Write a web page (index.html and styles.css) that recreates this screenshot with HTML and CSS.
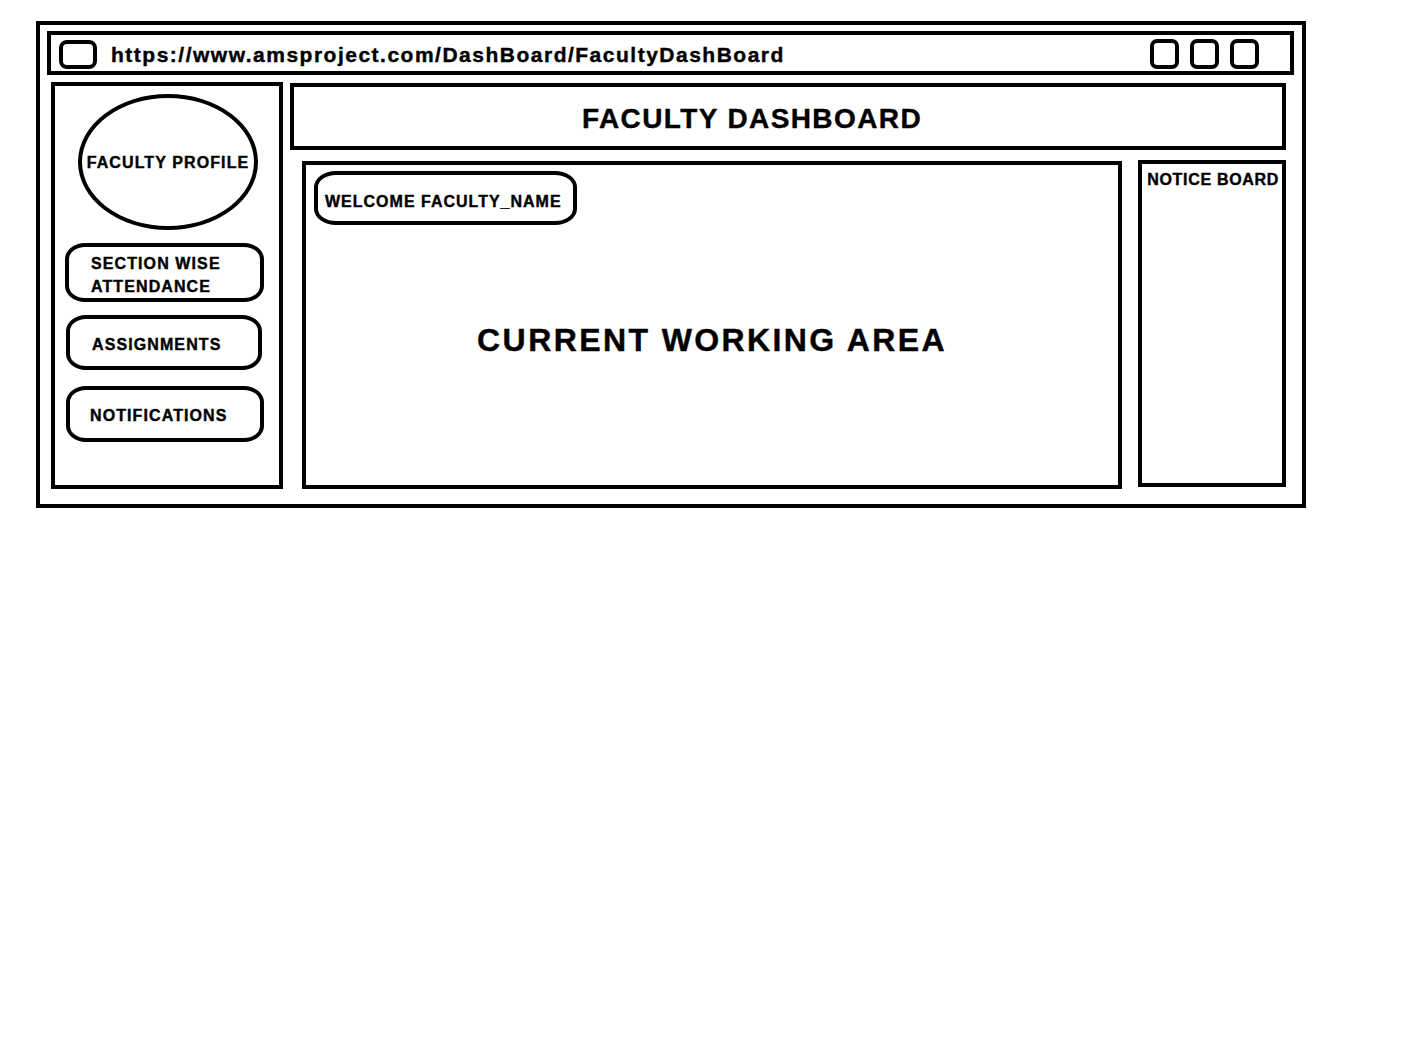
FILE: index.html
```html
<!DOCTYPE html>
<html lang="en">
<head>
  <meta charset="UTF-8">
  <title>Faculty Dashboard</title>
  <link rel="stylesheet" href="styles.css">
</head>
<body>

  <div class="window">

    <!-- Address bar -->
    <div class="urlbar">
      <span class="tab-icon"></span>
      <span class="url">https://www.amsproject.com/DashBoard/FacultyDashBoard</span>
      <div class="win-buttons">
        <span class="win-btn"></span>
        <span class="win-btn"></span>
        <span class="win-btn"></span>
      </div>
    </div>

    <div class="page">

      <!-- Sidebar -->
      <div class="sidebar">
        <div class="profile">FACULTY PROFILE</div>
        <div class="nav-btn nav-attendance">SECTION WISE<br>ATTENDANCE</div>
        <div class="nav-btn nav-assign">ASSIGNMENTS</div>
        <div class="nav-btn nav-notify">NOTIFICATIONS</div>
      </div>

      <div class="content">
        <header class="title">FACULTY DASHBOARD</header>

        <div class="panels">
          <div class="work-area">
            <div class="welcome">WELCOME FACULTY_NAME</div>
            <h2 class="work-title">CURRENT WORKING AREA</h2>
          </div>

          <div class="notice">NOTICE BOARD</div>
        </div>
      </div>

    </div>
  </div>

</body>
</html>
```

FILE: styles.css
```css
body {
  margin: 0;
  background: #fff;
  color: #000;
  font-family: "Liberation Sans", Arial, sans-serif;
  font-weight: bold;
  -webkit-text-stroke: 0.4px #000;
}
.window {
  box-sizing: border-box;
  width: 1270px;
  height: 487px;
  margin: 21px 0 0 36px;
  border: 4px solid #000;
  padding: 6px 8px 0 7px;
}

/* Address bar */
.urlbar {
  box-sizing: border-box;
  height: 44px;
  border: 4px solid #000;
  display: flex;
  align-items: center;
  padding: 0 31px 0 8px;
}
.tab-icon {
  box-sizing: border-box;
  width: 38px;
  height: 29px;
  border: 4px solid #000;
  border-radius: 8px;
  margin-top: 2px;
}
.url {
  margin-left: 14px;
  padding-top: 3px;
  font-size: 21px;
  letter-spacing: 1.5px;
  flex: 1;
}
.win-buttons {
  display: flex;
  gap: 11px;
  margin-top: 2px;
}
.win-btn {
  box-sizing: border-box;
  width: 29px;
  height: 30px;
  border: 4px solid #000;
  border-radius: 7px;
}

.page {
  display: flex;
  margin-top: 7px;
  padding-left: 4px;
}

/* Sidebar */
.sidebar {
  box-sizing: border-box;
  width: 232px;
  height: 407px;
  border: 4px solid #000;
  padding: 8px 0 0 10px;
  font-size: 16px;
  letter-spacing: 1.1px;
}
.profile {
  box-sizing: border-box;
  width: 180px;
  height: 136px;
  margin-left: 13px;
  border: 4px solid #000;
  border-radius: 50%;
  display: flex;
  align-items: center;
  justify-content: center;
  white-space: nowrap;
  padding-top: 1px;
  margin-bottom: 13px;
}
.nav-btn {
  box-sizing: border-box;
  border: 4px solid #000;
  border-radius: 20px / 16px;
  padding: 4px 0 0 22px;
  display: flex;
  align-items: center;
}
.nav-attendance {
  width: 199px;
  height: 59px;
  line-height: 23px;
  margin-bottom: 13px;
}
.nav-assign {
  width: 196px;
  height: 55px;
  margin-left: 1px;
  margin-bottom: 16px;
}
.nav-notify {
  width: 198px;
  height: 56px;
  margin-left: 1px;
  padding-left: 20px;
}

/* Main content */
.content {
  margin-left: 7px;
  width: 996px;
  display: flex;
  flex-direction: column;
}
.title {
  box-sizing: border-box;
  height: 67px;
  margin-top: 1px;
  border: 4px solid #000;
  display: flex;
  align-items: center;
  justify-content: center;
  font-size: 28px;
  letter-spacing: 1.4px;
  padding: 5px 72px 0 0;
}
.panels {
  display: flex;
  align-items: flex-start;
  margin-top: 10px;
  padding-left: 12px;
}
.work-area {
  box-sizing: border-box;
  width: 821px;
  height: 328px;
  margin-top: 1px;
  border: 4px solid #000;
  padding: 6px 0 0 8px;
}
.welcome {
  box-sizing: border-box;
  width: 263px;
  height: 54px;
  border: 4px solid #000;
  border-radius: 22px / 16px;
  display: flex;
  align-items: center;
  padding: 8px 0 0 7px;
  font-size: 16px;
  letter-spacing: 1px;
}
.work-title {
  margin: 97px 0 0 0;
  text-align: center;
  font-size: 32px;
  letter-spacing: 2.4px;
  padding-right: 8px;
}
.notice {
  box-sizing: border-box;
  width: 148px;
  height: 327px;
  margin-left: 16px;
  border: 4px solid #000;
  padding: 7px 0 0 5px;
  font-size: 16px;
  letter-spacing: 0.7px;
  white-space: nowrap;
}
```
